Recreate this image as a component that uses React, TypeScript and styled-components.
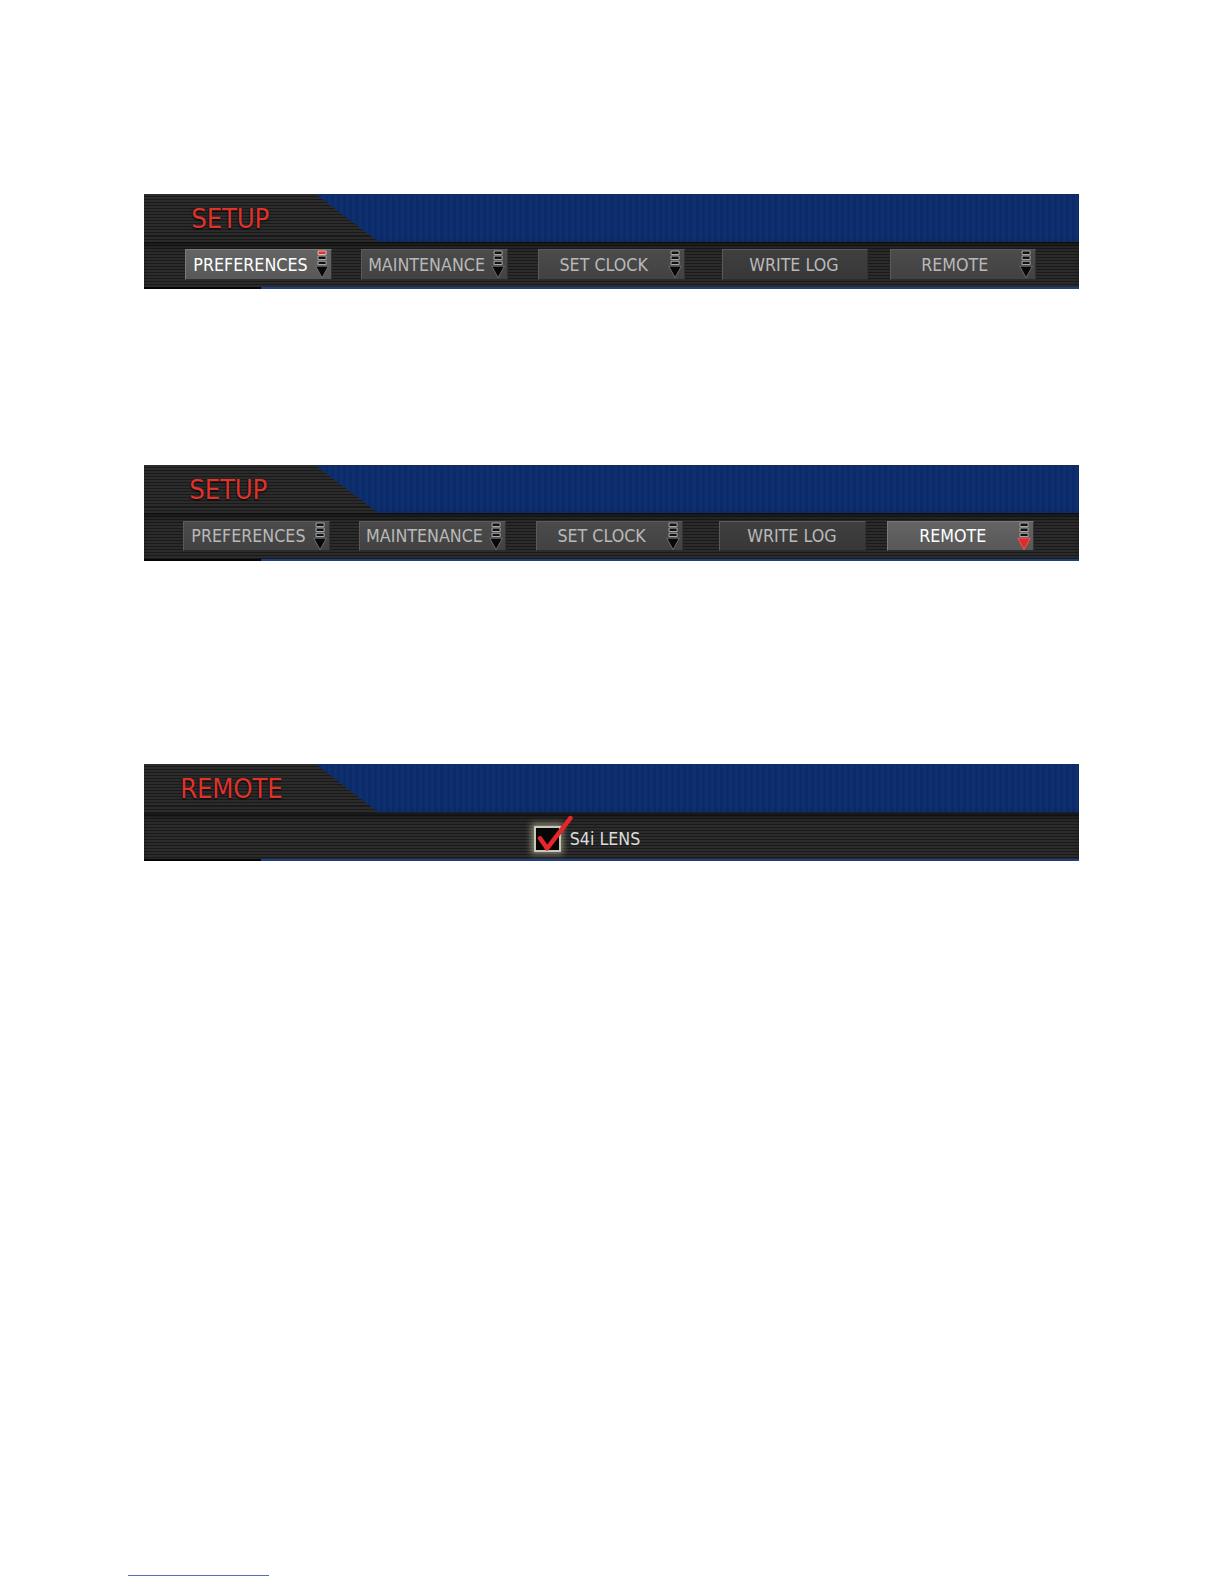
import React from "react";
import styled, { createGlobalStyle } from "styled-components";

const GlobalStyle = createGlobalStyle`
  html, body {
    margin: 0;
    padding: 0;
    background: #ffffff;
    overflow: hidden;
  }
  body {
    font-family: "DejaVu Sans Condensed", "DejaVu Sans", sans-serif;
  }
`;

const Page = styled.div`
  width: 1224px;
  height: 1584px;
  zoom: 1.012;
  overflow: hidden;
  display: flex;
  flex-direction: column;
  padding-left: 142px;
  box-sizing: border-box;
`;

const Panel = styled.section<{ $top: number }>`
  width: 924px;
  margin-top: ${(p) => p.$top}px;
  display: flex;
  flex-direction: column;
  background: repeating-linear-gradient(
    to bottom,
    #2b2b2b 0px,
    #2b2b2b 2px,
    #1a1a1a 2px,
    #1a1a1a 3px
  );
`;

const Header = styled.div<{ $h: number }>`
  height: ${(p) => p.$h}px;
  display: flex;
  align-items: center;
`;

const Title = styled.div<{ $indent: number }>`
  width: 170px;
  box-sizing: border-box;
  padding-left: ${(p) => p.$indent}px;
  font-size: 27px;
  color: #de322b;
  letter-spacing: -0.2px;
  text-shadow: 0 1px 2px #000;
`;

const BlueFill = styled.div`
  flex: 1;
  align-self: stretch;
  background: repeating-linear-gradient(
      to right,
      rgba(255, 255, 255, 0.015) 0px,
      rgba(255, 255, 255, 0.015) 3px,
      rgba(0, 0, 0, 0.03) 3px,
      rgba(0, 0, 0, 0.03) 6px
    ),
    linear-gradient(to bottom, #0b2c6c, #0b2d6e 80%, #0a2a66);
  clip-path: polygon(0 0, 100% 0, 100% 100%, 62px 100%);
`;

const Bar = styled.div<{ $h: number; $inset: number }>`
  height: ${(p) => p.$h}px;
  display: flex;
  align-items: center;
  padding-left: ${(p) => p.$inset}px;
  box-shadow: inset 0 6px 6px -3px rgba(0, 0, 0, 0.6);
`;

const EdgeLine = styled.div`
  height: 2px;
  background: linear-gradient(to right, #050505 116px, #1f3f84 116px);
`;

const Button = styled.div<{ $active?: boolean; $gap: number; $flat?: boolean }>`
  width: 145px;
  height: 30px;
  margin-left: ${(p) => p.$gap}px;
  box-sizing: border-box;
  display: flex;
  align-items: center;
  padding-right: 2px;
  border: 1px solid ${(p) => (p.$active ? "#7a7a7a" : "#5a5a5a")};
  border-bottom-color: #2c2c2c;
  border-right-color: #333;
  background: ${(p) =>
    p.$active
      ? "linear-gradient(to bottom, #646464, #585858)"
      : p.$flat
      ? "linear-gradient(to bottom, #3f3f3f, #383838)"
      : "linear-gradient(to bottom, #4b4b4b, #424242)"};
  color: ${(p) => (p.$active ? "#ffffff" : "#b9b9b9")};
  font-size: 17.5px;
`;

const Label = styled.span`
  flex: 1;
  text-align: center;
  white-space: nowrap;
`;

const IconSlot = styled.svg`
  width: 14px;
  height: 28px;
  flex: none;
`;

const Menu = ({ bar, arrow }: { bar?: boolean; arrow?: boolean }) => (
  <IconSlot viewBox="0 0 14 28">
    <rect x="3" y="1" width="8" height="3.4" rx="0.6" fill={bar ? "#d23a3a" : "#111"} stroke={bar ? "#f0b0b0" : "#a8a8a8"} strokeWidth="1" />
    <rect x="3" y="6" width="8" height="3.4" rx="0.6" fill="#111" stroke="#a8a8a8" strokeWidth="1" />
    <rect x="3" y="11" width="8" height="3.4" rx="0.6" fill="#111" stroke="#a8a8a8" strokeWidth="1" />
    <polygon points="0.8,16 13.2,16 7,27.4" fill={arrow ? "#e02a2a" : "#080808"} stroke={arrow ? "#ff5a5a" : "#7a7a7a"} strokeWidth="0.8" />
  </IconSlot>
);

const Check = styled.label`
  display: flex;
  align-items: center;
  gap: 9px;
  margin-top: 6px;
  color: #dcdcdc;
  font-size: 17.5px;
`;

const Box = styled.div`
  width: 26px;
  height: 26px;
  box-sizing: border-box;
  background: #060606;
  border: 2px solid #c8c8b8;
  box-shadow: 0 0 6px 3px rgba(230, 225, 190, 0.5);
  position: relative;
`;

const Tick = styled.svg`
  position: absolute;
  left: 0px;
  top: -14px;
  width: 36px;
  height: 38px;
`;

type Item = { label: string; gap: number; menu?: boolean; flat?: boolean };

const items: Item[] = [
  { label: "PREFERENCES", gap: 0, menu: true },
  { label: "MAINTENANCE", gap: 29, menu: true },
  { label: "SET CLOCK", gap: 30, menu: true },
  { label: "WRITE LOG", gap: 36, flat: true },
  { label: "REMOTE", gap: 21, menu: true },
];

const SetupPanel = ({ top, active, indent, inset }: { top: number; active: string; indent: number; inset: number }) => (
  <Panel $top={top}>
    <Header $h={47}>
      <Title $indent={indent}>SETUP</Title>
      <BlueFill />
    </Header>
    <Bar $h={45} $inset={inset}>
      {items.map((it) => {
        const on = it.label === active;
        return (
          <Button key={it.label} $gap={it.gap} $active={on} $flat={it.flat}>
            <Label>{it.label}</Label>
            {it.menu && <Menu bar={on && it.label === "PREFERENCES"} arrow={on && it.label === "REMOTE"} />}
          </Button>
        );
      })}
    </Bar>
    <EdgeLine />
  </Panel>
);

const FootRule = styled.div`
  width: 140px;
  height: 1px;
  margin: auto 0 27px -16px;
  background: #5a6cb8;
`;

export default function App() {
  return (
    <Page>
      <GlobalStyle />
      <SetupPanel top={192} active="PREFERENCES" indent={47} inset={41} />
      <SetupPanel top={174} active="REMOTE" indent={45} inset={39} />
      <Panel $top={201}>
        <Header $h={48}>
          <Title $indent={36}>REMOTE</Title>
          <BlueFill />
        </Header>
        <Bar $h={46} $inset={386}>
          <Check>
            <Box>
              <Tick viewBox="0 0 36 38">
                <path d="M4 24 L11 34 L34 4" fill="none" stroke="#e5262a" strokeWidth="4.5" strokeLinecap="round" strokeLinejoin="round" />
              </Tick>
            </Box>
            S4i LENS
          </Check>
        </Bar>
        <EdgeLine />
      </Panel>
      <FootRule />
    </Page>
  );
}
